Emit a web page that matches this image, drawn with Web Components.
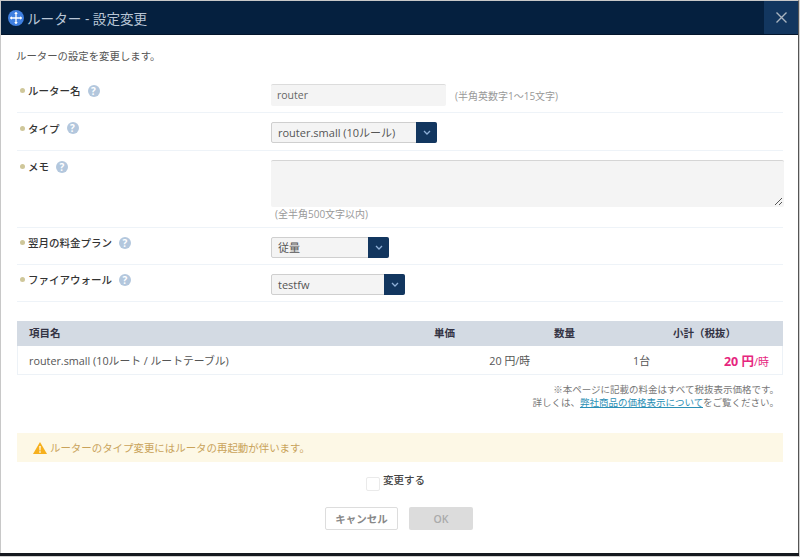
<!DOCTYPE html>
<html lang="ja">
<head>
<meta charset="utf-8">
<style>
  html, body { margin: 0; height: 100%; background: #d0d0d0; }
  body {
    font-family: "Open Sans", "Noto Sans CJK JP", sans-serif;
    overflow: hidden;
  }
</style>
</head>
<body>

<router-dialog heading="ルーター - 設定変更">
  <p class="lead" style="margin:0 0 13px -1px;font-size:10.4px;color:#555;line-height:14px">ルーターの設定を変更します。</p>

  <form-row label="ルーター名" h="37">
    <div style="display:flex;align-items:center;gap:9px">
      <text-box value="router"></text-box>
      <span style="font-size:10px;color:#999">(半角英数字1～15文字)</span>
    </div>
  </form-row>
  <form-row label="タイプ" h="38">
    <select-box value="router.small (10ルール)" w="166"></select-box>
  </form-row>
  <form-row label="メモ" h="77" top="9">
    <memo-box></memo-box>
    <div style="font-size:10px;color:#999;padding:1px 0 0 4px;line-height:12px">(全半角500文字以内)</div>
  </form-row>
  <form-row label="翌月の料金プラン" h="37">
    <select-box value="従量" w="118"></select-box>
  </form-row>
  <form-row label="ファイアウォール" h="37">
    <select-box value="testfw" w="134"></select-box>
  </form-row>

  <price-table></price-table>

  <div style="text-align:right;font-size:9.5px;line-height:13px;color:#777;padding:8px 4px 0 0">
    ※本ページに記載の料金はすべて税抜表示価格です。<br>
    詳しくは、<span style="color:#2b8fb5;text-decoration:underline">弊社商品の価格表示について</span>をご覧ください。
  </div>

  <warn-box>ルーターのタイプ変更にはルータの再起動が伴います。</warn-box>

  <confirm-area></confirm-area>
</router-dialog>

<script>
// ダイアログ本体
class RouterDialog extends HTMLElement {
  constructor() {
    super();
    this.attachShadow({ mode: 'open' });
    this.shadowRoot.innerHTML = `
      <style>
        :host {
          display: flex;
          flex-direction: column;
          width: 799px;
          height: 553px;
          box-sizing: border-box;
          border-top: 1px solid #c8c8c8;
          border-left: 1px solid #c8c8c8;
          border-right: 1px solid #555;
          background: #fff;
          box-shadow: 0 3px 0 #15191f;
        }
        header {
          height: 34px;
          box-sizing: border-box;
          flex: none;
          display: flex;
          align-items: stretch;
          background: #05203f;
          border-bottom: 1px solid #03152c;
          color: #b9c6d6;
        }
        .title {
          flex: 1;
          display: flex;
          align-items: center;
          gap: 3px;
          padding-left: 7px;
          font-size: 13.6px;
        }
        .close {
          width: 34px;
          display: flex;
          align-items: center;
          justify-content: center;
          background: #12365f;
        }
        main {
          flex: 1;
          padding: 14px 15px 0 16px;
          display: flex;
          flex-direction: column;
        }
      </style>
      <header>
        <div class="title">
          <svg width="16" height="16" viewBox="0 0 16 16">
            <circle cx="8" cy="8" r="8" fill="#3f7fe0"/>
            <path d="M8 2.5v11M2.5 8h11" stroke="#fff" stroke-width="1.3"/>
            <path d="M8 1.8l1.800 2.200H6.200zM8 14.200l1.800-2.200H6.200zM1.800 8l2.200-1.800v3.600zM14.200 8l-2.200-1.800v3.600z" fill="#fff"/>
          </svg>
          <span>${this.getAttribute('heading')}</span>
        </div>
        <div class="close">
          <svg width="13" height="13" viewBox="0 0 13 13"><path d="M1.500 1.500l10 10M11.500 1.500l-10 10" stroke="#a9b4c0" stroke-width="1.4"/></svg>
        </div>
      </header>
      <main><slot></slot></main>
    `;
  }
}

// フォームの1行
class FormRow extends HTMLElement {
  constructor() {
    super();
    this.attachShadow({ mode: 'open' });
    let h = this.getAttribute('h');
    let top = this.getAttribute('top') || 0;
    this.shadowRoot.innerHTML = `
      <style>
        :host {
          display: block;
          box-sizing: border-box;
          border-bottom: 1px solid #eef3f8;
        }
        .wrap {
          display: grid;
          grid-template-columns: 254px 1fr;
          box-sizing: border-box;
          height: ${h - 1}px;
          align-items: center;
        }
        .wrap.top { align-items: start; padding-top: ${top}px; }
        .lbl {
          display: flex;
          align-items: center;
          font-size: 10.5px;
          font-weight: 500;
          color: #333;
          padding-left: 3px;
          margin-top: -7px;
        }
        .ctl { margin-top: 2px; }
        .wrap.top .ctl { margin-top: 0; }
        .wrap.top .lbl { margin-top: -1px; }
        .dot { width: 5px; height: 5px; border-radius: 50%; background: #cfc79a; margin-right: 3px; }
        .q {
          width: 12px; height: 12px; border-radius: 50%;
          background: #b3c7dd; color: #fff; margin-left: 7px;
          font-size: 10px; font-weight: 700; line-height: 12px; text-align: center;
        }
      </style>
      <div class="wrap ${top ? 'top' : ''}">
        <div class="lbl"><span class="dot"></span>${this.getAttribute('label')}<span class="q">?</span></div>
        <div class="ctl"><slot></slot></div>
      </div>
    `;
  }
}

class TextBox extends HTMLElement {
  constructor() {
    super();
    this.attachShadow({ mode: 'open' });
    this.shadowRoot.innerHTML = `
      <style>
        :host {
          display: block;
          width: 175px; height: 22px;
          box-sizing: border-box;
          background: #f4f4f4;
          border-top: 1px solid #dcdcdc;
          border-radius: 2px;
          font-size: 10.5px;
          line-height: 20px;
          color: #666;
          padding-left: 6px;
        }
      </style>${this.getAttribute('value')}`;
  }
}

class SelectBox extends HTMLElement {
  constructor() {
    super();
    this.attachShadow({ mode: 'open' });
    this.shadowRoot.innerHTML = `
      <style>
        :host {
          display: flex;
          width: ${this.getAttribute('w')}px; height: 21px;
          box-sizing: border-box;
          background: #f4f4f4;
          border: 1px solid #cfcfcf;
          border-radius: 2px;
          font-size: 11px;
          color: #555;
        }
        .v { flex: 1; line-height: 19px; padding-left: 6px; white-space: nowrap; }
        .b { width: 21px; margin: -1px; background: #12365f; border-radius: 0 2px 2px 0; display: flex; align-items: center; justify-content: center; }
      </style>
      <div class="v">${this.getAttribute('value')}</div>
      <div class="b"><svg width="8" height="5" viewBox="0 0 8 5"><path d="M1 1l3 3 3-3" fill="none" stroke="#8fb0d8" stroke-width="1.3"/></svg></div>`;
  }
}

class MemoBox extends HTMLElement {
  constructor() {
    super();
    this.attachShadow({ mode: 'open' });
    this.shadowRoot.innerHTML = `
      <style>
        :host {
          display: block;
          position: relative;
          height: 47px;
          margin-right: -1px;
          box-sizing: border-box;
          background: #f4f4f4;
          border-top: 1px solid #d5d5d5;
          border-radius: 2px;
        }
        svg { position: absolute; right: 1px; bottom: 1px; }
      </style>
      <svg width="9" height="9" viewBox="0 0 9 9"><path d="M1 8l7-7M5 8l3-3" stroke="#555" stroke-width="1"/></svg>`;
  }
}

class PriceTable extends HTMLElement {
  constructor() {
    super();
    this.attachShadow({ mode: 'open' });
    this.shadowRoot.innerHTML = `
      <style>
        :host { display: block; margin-top: 19px; color: #555; }
        .r { display: grid; align-items: center; padding-left: 12px; }
        .h { height: 25px; box-sizing: border-box; padding-bottom: 3px; grid-template-columns: 1fr 60px 120px 161px; padding-right: 47px; background: #d3dae3; font-size: 10.5px; font-weight: 600; color: #334; }
        .b { height: 29px; grid-template-columns: 1fr 60px 120px 119px; padding-left: 11px; padding-right: 13px; box-sizing: border-box; border: 1px solid #edf2f7; border-top: 0; font-size: 10.8px; }
        .n { text-align: right; white-space: nowrap; }
        .p { color: #e6267e; font-size: 12.5px; font-weight: 700; }
        .p small { font-size: 11px; font-weight: 400; }
      </style>
      <div class="r h"><span>項目名</span><span class="n">単価</span><span class="n">数量</span><span class="n">小計（税抜）</span></div>
      <div class="r b"><span>router.small (10ルート / ルートテーブル)</span><span class="n">20 円/時</span><span class="n">1台</span><span class="n p">20 円<small>/時</small></span></div>`;
  }
}

class WarnBox extends HTMLElement {
  constructor() {
    super();
    this.attachShadow({ mode: 'open' });
    this.shadowRoot.innerHTML = `
      <style>
        :host {
          display: flex; align-items: center; gap: 3px;
          height: 29px; margin-top: 24px; padding-left: 16px;
          background: #fdf8e6; color: #c9a35a; font-size: 10.45px;
        }
      </style>
      <svg width="14" height="12" viewBox="0 0 14 12"><path d="M7 0l7 12H0z" fill="#f6b01e"/><path d="M6.300 4h1.400l-.2 4.500h-1zM6.300 9.300h1.400v1.400H6.300z" fill="#fff"/></svg>
      <slot></slot>`;
  }
}

class ConfirmArea extends HTMLElement {
  constructor() {
    super();
    this.attachShadow({ mode: 'open' });
    this.shadowRoot.innerHTML = `
      <style>
        :host { display: flex; flex-direction: column; align-items: center; }
        .chk { display: flex; align-items: flex-start; gap: 3px; margin-top: 10px; margin-left: -9px; font-size: 10.5px; font-weight: 500; color: #444; height: 35px; }
        .box { width: 14px; height: 14px; border: 1px solid #eaeaea; border-radius: 2px; margin-top: 5px; box-sizing: border-box; }
        .btns { display: flex; gap: 11px; margin-left: -2px; }
        .btn { box-sizing: border-box; height: 23px; border-radius: 2px; font-size: 10.5px; font-weight: 600; display: flex; align-items: center; justify-content: center; }
        .c { width: 73px; border: 1px solid #ddd; color: #888; background: #fff; }
        .o { width: 64px; background: #dcdcdc; color: #aaa; }
      </style>
      <div class="chk"><span class="box"></span><span>変更する</span></div>
      <div class="btns"><div class="btn c">キャンセル</div><div class="btn o">OK</div></div>`;
  }
}

window.customElements.define('router-dialog', RouterDialog);
window.customElements.define('form-row', FormRow);
window.customElements.define('text-box', TextBox);
window.customElements.define('select-box', SelectBox);
window.customElements.define('memo-box', MemoBox);
window.customElements.define('price-table', PriceTable);
window.customElements.define('warn-box', WarnBox);
window.customElements.define('confirm-area', ConfirmArea);
</script>
</body>
</html>
